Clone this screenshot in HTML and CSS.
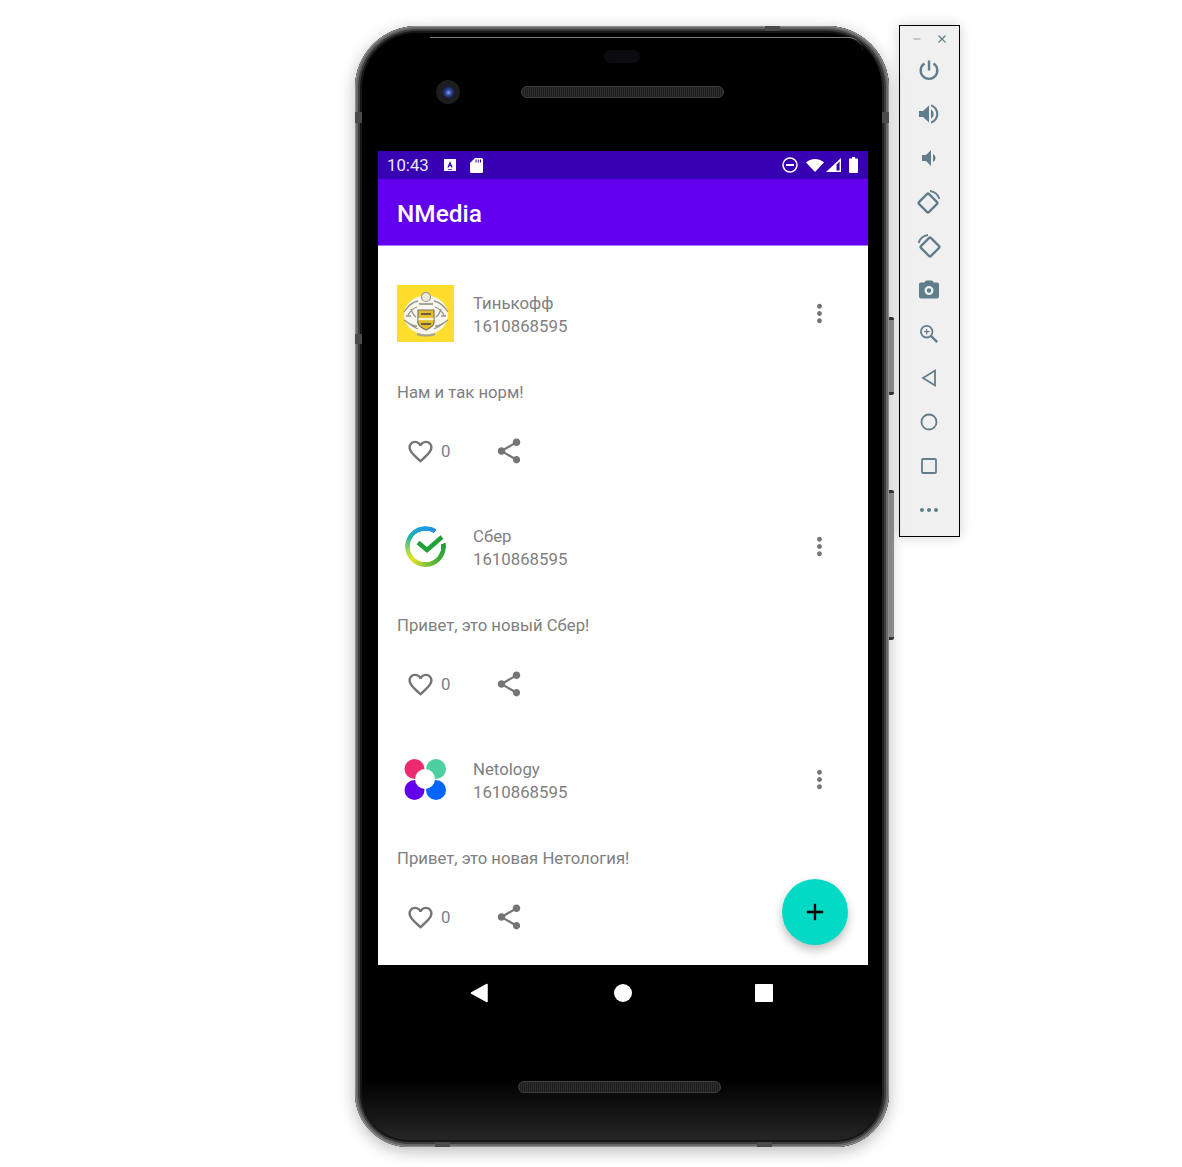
FILE: index.html
```html
<!DOCTYPE html>
<html lang="en">
<head>
    <meta charset="UTF-8">
    <meta name="viewport" content="width=device-width, initial-scale=1.0">
    <title>NMedia</title>
    <link rel="stylesheet" href="styles.css">
</head>
<body>
    <div class="stage">
        <div class="phone">
            <div class="seam seam-left"></div>
            <div class="seam seam-left-low"></div>
            <div class="seam seam-right"></div>
            <div class="seam seam-top"></div>
            <div class="seam seam-bottom-a"></div>
            <div class="seam seam-bottom-b"></div>

            <div class="bezel-top">
                <div class="sensor"></div>
                <div class="bezel-row">
                    <div class="camera"><div class="lens"></div></div>
                    <div class="speaker"></div>
                </div>
            </div>

            <div class="screen">
                <div class="status-bar">
                    <span class="clock">10:43</span>
                    <svg class="status-a" viewBox="0 0 12 12"><path fill="#fff" d="M0 0h12v12H0z"/><path fill="#3700B3" d="M6 2l2.6 6.5H7.3L6.8 7.2H5.2l-.5 1.3H3.4zM5.6 6.1h.8L6 5zM4 10h4v.7H4z"/></svg>
                    <svg class="status-sd" viewBox="0 0 13 15"><path fill="#fff" d="M5 0h6.5A1.5 1.5 0 0 1 13 1.5v12a1.5 1.5 0 0 1-1.5 1.5h-10A1.5 1.5 0 0 1 0 13.5V5z"/><path fill="#3700B3" d="M5.5 1.5h1v3h-1zM7.8 1.5h1v3h-1zM10 1.5h1v3h-1z"/></svg>
                    <div class="status-right">
                        <svg class="status-dnd" viewBox="0 0 16 16"><circle cx="8" cy="8" r="7" fill="none" stroke="#fff" stroke-width="1.5"/><path fill="#fff" d="M4 7h8v2H4z"/></svg>
                        <svg class="status-wifi" viewBox="0 0 18 13"><path fill="#fff" d="M9 13L0 3.5C2.3 1.3 5.5 0 9 0s6.7 1.3 9 3.5z"/></svg>
                        <svg class="status-signal" viewBox="0 0 15 14"><path fill="#fff" d="M15 0v14H0z"/><path fill="#3700B3" d="M13.6 3.4l-3.1 3.3v5.8h3.1z"/></svg>
                        <svg class="status-battery" viewBox="0 0 9 16"><path fill="#fff" d="M3 0h3v1.5h2a1 1 0 0 1 1 1V15a1 1 0 0 1-1 1H1a1 1 0 0 1-1-1V2.5a1 1 0 0 1 1-1h2z"/></svg>
                    </div>
                </div>
                <div class="app-bar">NMedia</div>

                <div class="post-list">
                    <div class="post">
                        <div class="post-head">
                            <svg class="avatar" viewBox="0 0 57 57">
                                <rect width="57" height="57" fill="#ffdd2d"/>
                                <ellipse cx="29" cy="30" rx="22" ry="19.5" fill="#f8f6ee"/>
                                <circle cx="29" cy="12" r="4.5" fill="#eceadd" stroke="#94948a" stroke-width="1.2"/>
                                <path d="M7 27c4-6 8-10 14-11M51 27c-4-6-8-10-14-11M7 35c5 3 8 7 14 9M51 35c-5 3-8 7-14 9M11 30c3-5 6-7 9-8M47 30c-3-5-6-7-9-8M12 38c2 2 5 3 8 3M46 38c-2 2-5 3-8 3M14 24c1 3 2 6 5 8M44 24c-1 3-2 6-5 8M9 31h5M44 31h5" fill="none" stroke="#94948a" stroke-width="1.3"/>
                                <path d="M22 19h14M20 49c5 2 13 2 18 0" fill="none" stroke="#a5a599" stroke-width="2"/>
                                <path d="M21 25h16v13c0 3-4 5-8 7-4-2-8-4-8-7z" fill="#e5bd2b" stroke="#77766a" stroke-width="1.2"/>
                                <path d="M24 29h10M24 39h10" stroke="#6d5f42" stroke-width="2.2"/>
                                <path d="M21.5 34h15" stroke="#fdf6d0" stroke-width="2.4"/>
                            </svg>
                            <div class="post-info">
                                <div>Тинькофф</div>
                                <div>1610868595</div>
                            </div>
                            <svg class="menu-icon" viewBox="0 0 24 24"><path d="M12 8c1.1 0 2-.9 2-2s-.9-2-2-2-2 .9-2 2 .9 2 2 2zm0 2c-1.1 0-2 .9-2 2s.9 2 2 2 2-.9 2-2-.9-2-2-2zm0 6c-1.1 0-2 .9-2 2s.9 2 2 2 2-.9 2-2-.9-2-2-2z"/></svg>
                        </div>
                        <div class="post-text">Нам и так норм!</div>
                        <div class="post-actions">
                            <svg class="like-icon" viewBox="0 0 24 24"><path d="M16.5 3c-1.74 0-3.41.81-4.5 2.09C10.91 3.81 9.24 3 7.5 3 4.42 3 2 5.42 2 8.5c0 3.78 3.4 6.86 8.55 11.54L12 21.35l1.45-1.32C18.6 15.36 22 12.28 22 8.5 22 5.42 19.58 3 16.5 3zm-4.4 15.55l-.1.1-.1-.1C7.14 14.24 4 11.39 4 8.5 4 6.5 5.5 5 7.5 5c1.54 0 3.04.99 3.57 2.36h1.87C13.46 5.99 14.96 5 16.5 5c2 0 3.5 1.5 3.5 3.5 0 2.89-3.14 5.74-7.9 10.05z"/></svg>
                            <span class="like-count">0</span>
                            <svg class="share-icon" viewBox="0 0 24 24"><path d="M18 16.08c-.76 0-1.44.3-1.96.77L8.91 12.7c.05-.23.09-.46.09-.7s-.04-.47-.09-.7l7.05-4.11c.54.5 1.25.81 2.04.81 1.66 0 3-1.34 3-3s-1.34-3-3-3-3 1.34-3 3c0 .24.04.47.09.7L8.04 9.81C7.5 9.31 6.79 9 6 9c-1.66 0-3 1.34-3 3s1.34 3 3 3c.79 0 1.5-.31 2.04-.81l7.12 4.16c-.05.21-.08.43-.08.65 0 1.61 1.31 2.92 2.92 2.92 1.61 0 2.92-1.31 2.92-2.92s-1.31-2.92-2.92-2.92z"/></svg>
                        </div>
                    </div>

                    <div class="post">
                        <div class="post-head">
                            <div class="avatar sber-logo">
                                <svg class="sber-check" viewBox="0 0 57 57"><path d="M21 24.5l9 7.5 15-13" fill="none" stroke="#21a038" stroke-width="4.5"/></svg>
                            </div>
                            <div class="post-info">
                                <div>Сбер</div>
                                <div>1610868595</div>
                            </div>
                            <svg class="menu-icon" viewBox="0 0 24 24"><path d="M12 8c1.1 0 2-.9 2-2s-.9-2-2-2-2 .9-2 2 .9 2 2 2zm0 2c-1.1 0-2 .9-2 2s.9 2 2 2 2-.9 2-2-.9-2-2-2zm0 6c-1.1 0-2 .9-2 2s.9 2 2 2 2-.9 2-2-.9-2-2-2z"/></svg>
                        </div>
                        <div class="post-text">Привет, это новый Сбер!</div>
                        <div class="post-actions">
                            <svg class="like-icon" viewBox="0 0 24 24"><path d="M16.5 3c-1.74 0-3.41.81-4.5 2.09C10.91 3.81 9.24 3 7.5 3 4.42 3 2 5.42 2 8.5c0 3.78 3.4 6.86 8.55 11.54L12 21.35l1.45-1.32C18.6 15.36 22 12.28 22 8.5 22 5.42 19.58 3 16.5 3zm-4.4 15.55l-.1.1-.1-.1C7.14 14.24 4 11.39 4 8.5 4 6.5 5.5 5 7.5 5c1.54 0 3.04.99 3.57 2.36h1.87C13.46 5.99 14.96 5 16.5 5c2 0 3.5 1.5 3.5 3.5 0 2.89-3.14 5.74-7.9 10.05z"/></svg>
                            <span class="like-count">0</span>
                            <svg class="share-icon" viewBox="0 0 24 24"><path d="M18 16.08c-.76 0-1.44.3-1.96.77L8.91 12.7c.05-.23.09-.46.09-.7s-.04-.47-.09-.7l7.05-4.11c.54.5 1.25.81 2.04.81 1.66 0 3-1.34 3-3s-1.34-3-3-3-3 1.34-3 3c0 .24.04.47.09.7L8.04 9.81C7.5 9.31 6.79 9 6 9c-1.66 0-3 1.34-3 3s1.34 3 3 3c.79 0 1.5-.31 2.04-.81l7.12 4.16c-.05.21-.08.43-.08.65 0 1.61 1.31 2.92 2.92 2.92 1.61 0 2.92-1.31 2.92-2.92s-1.31-2.92-2.92-2.92z"/></svg>
                        </div>
                    </div>

                    <div class="post">
                        <div class="post-head">
                            <svg class="avatar" viewBox="0 0 57 57">
                                <circle cx="17.5" cy="18" r="10" fill="#ee2a6f"/>
                                <circle cx="39" cy="18" r="10" fill="#4dcfa0"/>
                                <circle cx="17.5" cy="39" r="10" fill="#6200ee"/>
                                <circle cx="39" cy="39" r="10" fill="#0066ff"/>
                                <circle cx="28" cy="28" r="10" fill="#fff"/>
                            </svg>
                            <div class="post-info">
                                <div>Netology</div>
                                <div>1610868595</div>
                            </div>
                            <svg class="menu-icon" viewBox="0 0 24 24"><path d="M12 8c1.1 0 2-.9 2-2s-.9-2-2-2-2 .9-2 2 .9 2 2 2zm0 2c-1.1 0-2 .9-2 2s.9 2 2 2 2-.9 2-2-.9-2-2-2zm0 6c-1.1 0-2 .9-2 2s.9 2 2 2 2-.9 2-2-.9-2-2-2z"/></svg>
                        </div>
                        <div class="post-text">Привет, это новая Нетология!</div>
                        <div class="post-actions">
                            <svg class="like-icon" viewBox="0 0 24 24"><path d="M16.5 3c-1.74 0-3.41.81-4.5 2.09C10.91 3.81 9.24 3 7.5 3 4.42 3 2 5.42 2 8.5c0 3.78 3.4 6.86 8.55 11.54L12 21.35l1.45-1.32C18.6 15.36 22 12.28 22 8.5 22 5.42 19.58 3 16.5 3zm-4.4 15.55l-.1.1-.1-.1C7.14 14.24 4 11.39 4 8.5 4 6.5 5.5 5 7.5 5c1.54 0 3.04.99 3.57 2.36h1.87C13.46 5.99 14.96 5 16.5 5c2 0 3.5 1.5 3.5 3.5 0 2.89-3.14 5.74-7.9 10.05z"/></svg>
                            <span class="like-count">0</span>
                            <svg class="share-icon" viewBox="0 0 24 24"><path d="M18 16.08c-.76 0-1.44.3-1.96.77L8.91 12.7c.05-.23.09-.46.09-.7s-.04-.47-.09-.7l7.05-4.11c.54.5 1.25.81 2.04.81 1.66 0 3-1.34 3-3s-1.34-3-3-3-3 1.34-3 3c0 .24.04.47.09.7L8.04 9.81C7.5 9.31 6.79 9 6 9c-1.66 0-3 1.34-3 3s1.34 3 3 3c.79 0 1.5-.31 2.04-.81l7.12 4.16c-.05.21-.08.43-.08.65 0 1.61 1.31 2.92 2.92 2.92 1.61 0 2.92-1.31 2.92-2.92s-1.31-2.92-2.92-2.92z"/></svg>
                        </div>
                    </div>
                </div>

                <div class="fab">
                    <svg viewBox="0 0 24 24"><path d="M19 13h-6v6h-2v-6H5v-2h6V5h2v6h6v2z"/></svg>
                </div>
            </div>

            <div class="nav-bar">
                <svg class="nav-back" viewBox="0 0 18 20"><path d="M17 1.5v17L1.5 10z" fill="#fff" stroke="#fff" stroke-width="1.5" stroke-linejoin="round"/></svg>
                <div class="nav-home"></div>
                <div class="nav-recent"></div>
            </div>
            <div class="speaker speaker-bottom"></div>
        </div>

        <div class="side-buttons">
            <div class="side-button power-button"></div>
            <div class="side-button volume-button"></div>
        </div>

        <div class="toolbar">
            <div class="window-controls">
                <svg class="window-icon" viewBox="0 0 10 10"><path d="M1.5 5h7" stroke="#9fb1ba" stroke-width="1.2"/></svg>
                <svg class="window-icon" viewBox="0 0 10 10"><path d="M1.5 1.5l7 7M8.5 1.5l-7 7" stroke="#607d8b" stroke-width="1.2"/></svg>
            </div>
            <div class="tool">
                <svg viewBox="0 0 24 24"><path d="M12 2.5v10" class="line"/><path d="M7.5 5.6a8.3 8.3 0 1 0 9 0" class="line"/></svg>
            </div>
            <div class="tool">
                <svg viewBox="0 0 24 24"><path d="M2 9v6h4l6 5.5V3.5L6 9H2z"/><path d="M14 7.5c1.6.8 2.6 2.5 2.6 4.5s-1 3.7-2.6 4.5z"/><path d="M14 2.6v2c3 1 5.2 3.9 5.2 7.4s-2.2 6.4-5.2 7.4v2c4.2-1 7.3-4.8 7.3-9.4S18.2 3.6 14 2.6z"/></svg>
            </div>
            <div class="tool">
                <svg viewBox="0 0 24 24"><path d="M18.5 12c0-1.77-1.02-3.29-2.5-4.03v8.05c1.48-.73 2.5-2.25 2.5-4.02zM5 9v6h4l5 5V4L9 9H5z"/></svg>
            </div>
            <div class="tool">
                <svg viewBox="0 0 24 24"><rect x="4" y="6" width="14" height="14" rx="1.5" transform="rotate(45 11 13)" class="line"/><path d="M13 1c4 .5 8 3.5 9.5 8" class="thin"/></svg>
            </div>
            <div class="tool">
                <svg viewBox="0 0 24 24"><rect x="6" y="6" width="14" height="14" rx="1.5" transform="rotate(45 13 13)" class="line"/><path d="M11 1C7 1.5 3 4.500 1.500 9" class="thin"/></svg>
            </div>
            <div class="tool">
                <svg viewBox="0 0 24 24"><path d="M9 2.5L7.2 4.5H4c-1.100 0-2 .9-2 2v12c0 1.100.9 2 2 2h16c1.100 0 2-.9 2-2v-12c0-1.100-.9-2-2-2h-3.200L15 2.500H9zm3 14.500a4.500 4.500 0 1 1 0-9 4.500 4.500 0 0 1 0 9zm0-2.300a2.200 2.200 0 1 0 0-4.400 2.200 2.200 0 0 0 0 4.400z"/></svg>
            </div>
            <div class="tool">
                <svg viewBox="0 0 24 24"><circle cx="9.700" cy="9.700" r="5.800" class="thin"/><path d="M14.200 14.200l6 6" class="line"/><path d="M9.700 7v5.400M7 9.700h5.400" class="hair"/></svg>
            </div>
            <div class="tool">
                <svg viewBox="0 0 24 24"><path d="M18 4.500v15L6 12z" class="thin"/></svg>
            </div>
            <div class="tool">
                <svg viewBox="0 0 24 24"><circle cx="12" cy="12" r="7.500" class="thin"/></svg>
            </div>
            <div class="tool">
                <svg viewBox="0 0 24 24"><rect x="5" y="5" width="14" height="14" rx="1" class="thin"/></svg>
            </div>
            <div class="tool">
                <svg viewBox="0 0 24 24"><circle cx="5" cy="12" r="2"/><circle cx="12" cy="12" r="2"/><circle cx="19" cy="12" r="2"/></svg>
            </div>
        </div>
    </div>
</body>
</html>
```

FILE: styles.css
```css
html, body {
    margin: 0;
    height: 1167px;
    background-color: #fff;
    overflow: hidden;
}
body {
    font-family: Roboto, "Noto Sans", sans-serif;
}
.stage {
    display: flex;
    align-items: flex-start;
    padding: 26px 0 0 355px;
}

/* Phone frame */
.phone {
    position: relative;
    width: 534px;
    height: 1121px;
    box-sizing: border-box;
    padding: 0 21px 0 23px;
    border-radius: 62px 62px 54px 54px;
    background: linear-gradient(#000 0, #000 94%, #2a2a2a 100%);
    box-shadow:
        inset 0 0 0 1px #8f8f8f,
        inset 0 0 0 3px #686868,
        inset 0 0 0 5px #3c3c3c,
        inset -7px 0 0 0 #222,
        inset 0 0 0 7px #161616,
        0 4px 16px rgba(0, 0, 0, 0.28);
}
.phone::before {
    content: "";
    position: absolute;
    top: 11px;
    left: 75px;
    right: 26px;
    height: 14px;
    border-top: 1px solid #7c7c7c;
    border-radius: 0 26px 0 0;
}
.seam {
    position: absolute;
    background-color: #4a4a4a;
}
.seam-left {
    left: 0;
    top: 86px;
    width: 7px;
    height: 11px;
}
.seam-left-low {
    left: 0;
    top: 308px;
    width: 7px;
    height: 10px;
}
.seam-right {
    right: 0;
    top: 86px;
    width: 7px;
    height: 11px;
}
.seam-top {
    left: 410px;
    top: 0;
    width: 15px;
    height: 5px;
}
.seam-bottom-a {
    left: 80px;
    bottom: 0;
    width: 15px;
    height: 5px;
}
.seam-bottom-b {
    left: 402px;
    bottom: 0;
    width: 15px;
    height: 5px;
}
.bezel-top {
    height: 125px;
    box-sizing: border-box;
    padding-top: 24px;
}
.sensor {
    width: 36px;
    height: 13px;
    margin-left: 226px;
    border-radius: 7px;
    background-color: #0b0b10;
}
.bezel-row {
    display: flex;
    align-items: center;
    margin-top: 17px;
    padding-left: 58px;
    gap: 61px;
}
.camera {
    display: flex;
    align-items: center;
    justify-content: center;
    width: 24px;
    height: 24px;
    border-radius: 50%;
    background-color: #1d1d1f;
}
.lens {
    width: 12px;
    height: 12px;
    border-radius: 50%;
    background: radial-gradient(circle at 55% 55%, #7f9be8 0, #27408f 35%, #0a0f25 80%);
}
.speaker {
    width: 203px;
    height: 12px;
    box-sizing: border-box;
    border: 1px solid #3e3e3e;
    border-radius: 6px;
    background: repeating-linear-gradient(90deg, #2e2e2e 0, #2e2e2e 1px, #1c1c1c 1px, #1c1c1c 2px);
}
.speaker-bottom {
    margin: 60px 0 0 140px;
}

/* Screen */
.screen {
    position: relative;
    display: flex;
    flex-direction: column;
    width: 490px;
    height: 814px;
    background-color: #fff;
    overflow: hidden;
}
.status-bar {
    display: flex;
    align-items: center;
    height: 28px;
    padding: 0 10px 0 9px;
    background-color: #3700b3;
    color: #ece6f8;
    flex-shrink: 0;
}
.clock {
    font-size: 16.8px;
}
.status-a {
    width: 12px;
    height: 12px;
    margin-left: 15px;
}
.status-sd {
    width: 13px;
    height: 15px;
    margin-left: 14px;
}
.status-right {
    display: flex;
    align-items: center;
    margin-left: auto;
}
.status-dnd {
    width: 16px;
    height: 16px;
}
.status-wifi {
    width: 18px;
    height: 13px;
    margin-left: 8px;
}
.status-signal {
    width: 15px;
    height: 14px;
    margin-left: 2px;
}
.status-battery {
    width: 9px;
    height: 16px;
    margin-left: 8px;
}
.app-bar {
    display: flex;
    align-items: center;
    height: 67px;
    box-sizing: border-box;
    padding: 2px 0 0 19px;
    border-bottom: 1px solid #a87cf6;
    background-color: #6200ee;
    color: #fff;
    font-size: 24.4px;
    font-weight: 500;
    flex-shrink: 0;
}

/* Posts */
.post-list {
    padding-top: 20px;
}
.post {
    height: 233px;
    box-sizing: border-box;
    padding: 19px 19px 0;
    color: #808080;
}
.post-head {
    display: flex;
    align-items: center;
    height: 57px;
}
.avatar {
    display: block;
    width: 57px;
    height: 57px;
    flex-shrink: 0;
}
.sber-logo {
    position: relative;
}
.sber-logo::before {
    content: "";
    position: absolute;
    left: 8px;
    top: 8px;
    width: 41px;
    height: 41px;
    border-radius: 50%;
    background: conic-gradient(#1f9be0 0deg, #2b8fe0 32deg, transparent 33deg, transparent 80deg, #21a038 81deg, #3aaa35 130deg, #9ccb3b 190deg, #e2e41f 225deg, #8fd45a 265deg, #22b5a5 300deg, #1f9be0 340deg, #1f9be0 360deg);
    -webkit-mask: radial-gradient(circle, transparent 15.5px, #000 16px);
    mask: radial-gradient(circle, transparent 15.5px, #000 16px);
}
.sber-check {
    position: absolute;
    inset: 0;
}
.post-info {
    margin-left: 19px;
    padding-top: 2px;
    font-size: 16.8px;
    line-height: 23px;
}
.menu-icon {
    width: 29px;
    height: 29px;
    margin-left: auto;
    margin-right: 15px;
    fill: #757575;
}
.post-text {
    margin-top: 39px;
    font-size: 16.7px;
    line-height: 24px;
}
.post-actions {
    display: flex;
    align-items: center;
    height: 30px;
    margin-top: 31px;
    padding-left: 9px;
}
.like-icon {
    width: 29px;
    height: 29px;
    fill: #757575;
}
.like-count {
    margin-left: 6px;
    font-size: 16.8px;
}
.share-icon {
    width: 30px;
    height: 30px;
    margin-left: 44px;
    fill: #757575;
}
.fab {
    position: absolute;
    left: 404px;
    top: 728px;
    display: flex;
    align-items: center;
    justify-content: center;
    width: 66px;
    height: 66px;
    border-radius: 50%;
    background-color: #03dac5;
    box-shadow: 0 5px 10px rgba(0, 0, 0, 0.25);
}
.fab svg {
    width: 28px;
    height: 28px;
}

/* Android nav */
.nav-bar {
    height: 56px;
    display: flex;
    align-items: center;
    padding-left: 92px;
}
.nav-back {
    width: 18px;
    height: 20px;
}
.nav-home {
    width: 18px;
    height: 18px;
    margin-left: 126px;
    border-radius: 50%;
    background-color: #fff;
}
.nav-recent {
    width: 18px;
    height: 18px;
    margin-left: 123px;
    border-radius: 1px;
    background-color: #fff;
}

/* Hardware buttons */
.side-buttons {
    width: 6px;
    padding-top: 291px;
}
.side-button {
    width: 5px;
    box-sizing: border-box;
    border-top: 3px solid #3a3a3a;
    border-bottom: 3px solid #3a3a3a;
    border-radius: 0 2px 2px 0;
    background-color: #999;
}
.power-button {
    height: 78px;
    margin-bottom: 95px;
}
.volume-button {
    height: 150px;
}

/* Emulator toolbar */
.toolbar {
    width: 61px;
    height: 512px;
    box-sizing: border-box;
    margin: -1px 0 0 4px;
    border: 1px solid #000;
    background-color: #f0f0f0;
    box-shadow: 0 0 12px rgba(0, 0, 0, 0.18);
}
.window-controls {
    display: flex;
    justify-content: space-between;
    height: 22px;
    box-sizing: border-box;
    padding: 8px 12px 0;
}
.window-icon {
    width: 10px;
    height: 10px;
}
.tool {
    display: flex;
    align-items: center;
    justify-content: center;
    height: 44px;
    padding-right: 1px;
}
.tool svg {
    width: 24px;
    height: 24px;
    fill: #607d8b;
}
.tool .line {
    fill: none;
    stroke: #607d8b;
    stroke-width: 2.4;
}
.tool .thin {
    fill: none;
    stroke: #607d8b;
    stroke-width: 1.8;
}
.tool .hair {
    fill: none;
    stroke: #607d8b;
    stroke-width: 1.2;
}
```
